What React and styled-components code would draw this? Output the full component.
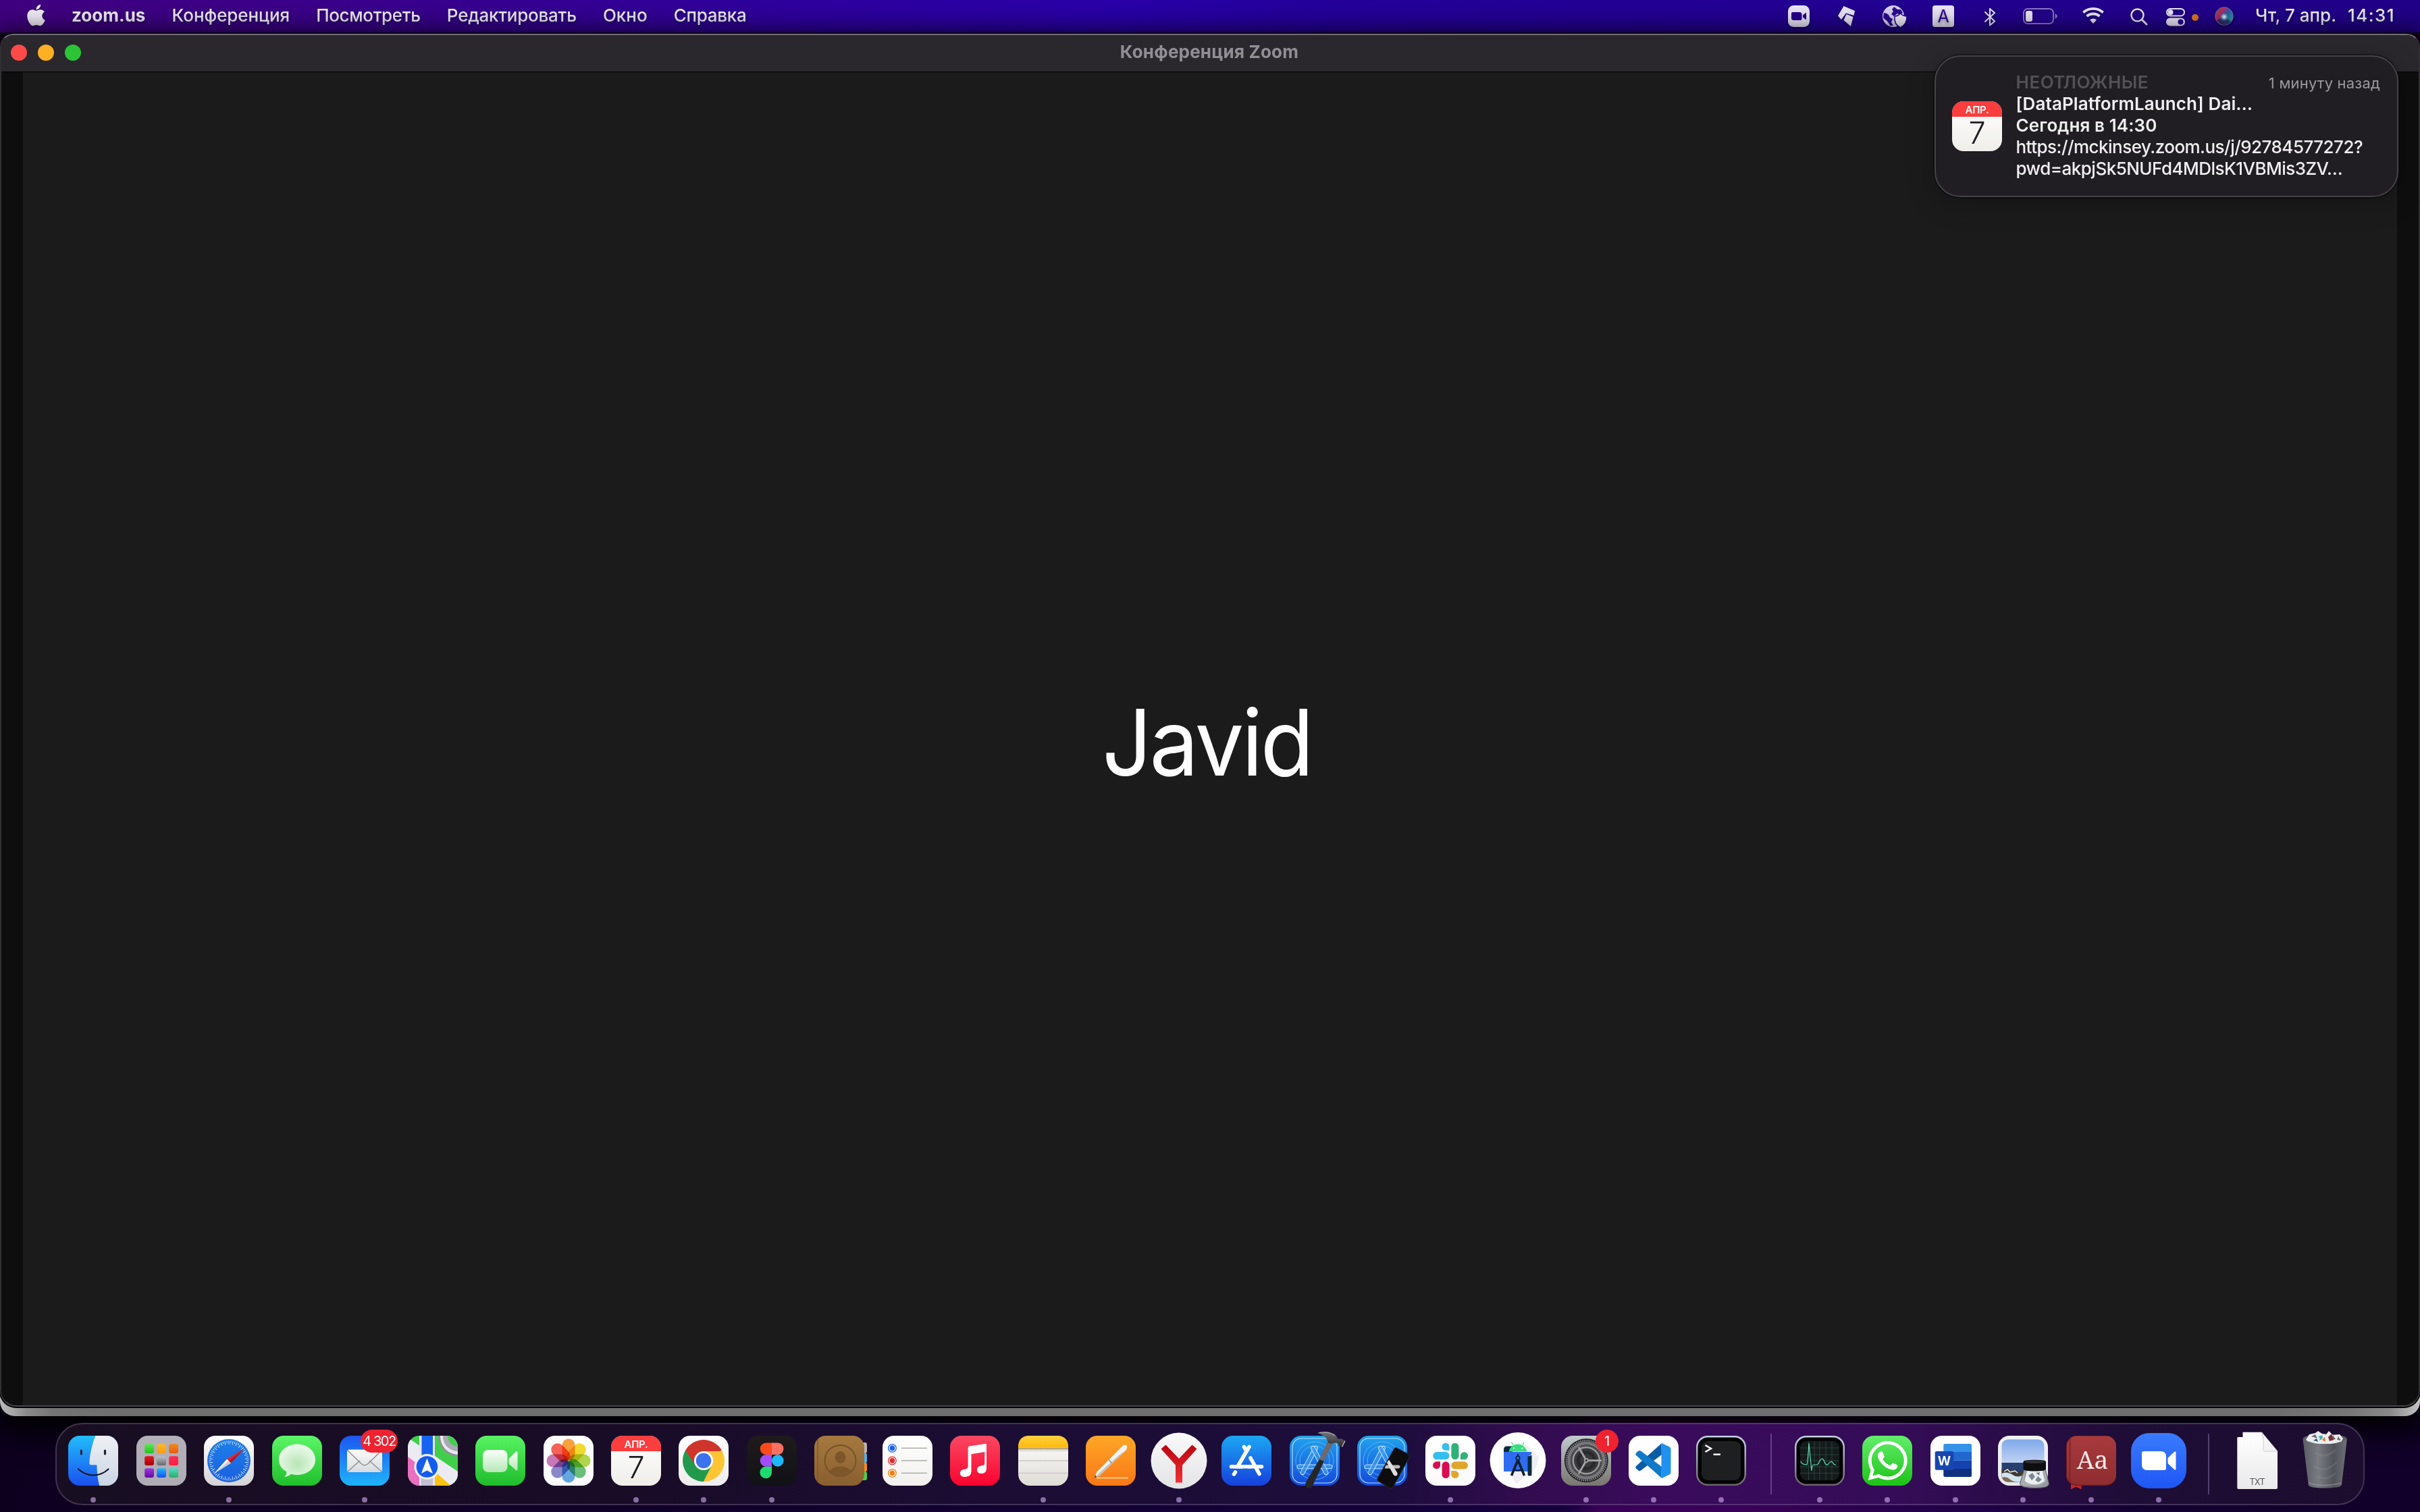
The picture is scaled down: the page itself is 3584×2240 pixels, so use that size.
import React from "react";
import styled, { createGlobalStyle, css } from "styled-components";
import { FaApple, FaWhatsapp } from "react-icons/fa";

const GlobalStyle = createGlobalStyle`
  * { box-sizing: border-box; }
  body { margin: 0; background: #0d0020; font-family: Inter, "Noto Sans", sans-serif; }
`;

/* ---------- Desktop and menu bar ---------- */
const Desktop = styled.div`
  position: relative;
  width: 3584px;
  height: 2240px;
  display: flex;
  flex-direction: column;
  overflow: hidden;
  background: linear-gradient(90deg, #0d001f 0%, #0f0028 25%, #130038 55%, #15003c 64.7%, #380056 66%, #390058 72%, #1d0045 82%, #12002e 90%, #110029 100%);
`;
const MenuBar = styled.header`
  flex: none;
  height: 48px;
  padding: 0 0 3px 40px;
  display: flex;
  align-items: center;
  background: linear-gradient(90deg, #40007f 0%, #38008e 18%, #2e009e 33%, #2900a8 46%, #240099 56%, #230092 76%, #210088 100%);
  color: #f3eefa;
  text-shadow: 0 2px 4px rgba(10, 0, 40, 0.45);
`;
const AppleMark = styled(FaApple)`
  width: 27px;
  height: 37px;
  margin: 0 39px 0 0;
  filter: drop-shadow(0 2px 2px rgba(10, 0, 40, 0.4));
`;
const Menus = styled.nav`
  display: flex;
  gap: 39.2px;
`;
const MenuItem = styled.span`
  font-size: 26px;
  line-height: 32px;
  white-space: nowrap;
  font-weight: ${(p) => (p.$app ? 700 : 500)};
  letter-spacing: ${(p) => p.$track || 0}px;
`;
const StatusArea = styled.div`
  margin-left: auto;
  display: flex;
  align-items: center;
`;
const StatusIcon = styled.svg`
  width: ${(p) => p.$w}px;
  height: 48px;
  margin: 3px 0 0 ${(p) => p.$gap}px;
  overflow: visible;
  filter: drop-shadow(0 2px 2px rgba(10, 0, 40, 0.35));
`;
const DateText = styled(MenuItem)`
  width: 137px;
  margin-left: 32px;
`;
const TimeText = styled(MenuItem)`
  width: 107px;
  letter-spacing: 1.4px;
`;

/* ---------- Window ---------- */
const WindowStack = styled.div`
  flex: none;
  height: 2050px;
  padding: 2px 0 14px;
  border-radius: 0 0 22px 22px;
  background: linear-gradient(90deg, #b8b8b8 0, #a8a8a8 18px, #8a8a8a 40px, #747474 80px, #6f6f6f 180px, #6f6f6f 3380px, #777 3480px, #8a8a8a 3540px, #c4c4c4 100%);
  box-shadow: 0 14px 44px 10px #000;
  position: relative;
`;
const TopEdge = styled.div`
  height: 24px;
  margin: -2px 0 -22px;
  background: #0c0012;
`;
const Window = styled.main`
  position: relative;
  height: 2034px;
  display: flex;
  flex-direction: column;
  border-radius: 20px 20px 24px 24px;
  background: #1b1b1b;
  border: 2px solid #48464a;
  border-top-color: #716d77;
  border-left-color: #323034;
  border-right-color: #323034;
  overflow: hidden;
  box-shadow: 0 1px 0 1px #000;
`;
const TitleBar = styled.div`
  flex: none;
  height: 55px;
  padding: 0 14px 5px;
  display: grid;
  grid-template-columns: 1fr auto 1fr;
  align-items: center;
  background: #2a272d;
  border-bottom: 1px solid #000;
`;
const Lights = styled.div`
  display: flex;
  gap: 16px;
  padding-top: 3px;
`;
const Light = styled.span`
  width: 24px;
  height: 24px;
  border-radius: 50%;
  background: ${(p) => p.$color};
`;
const Title = styled.h1`
  margin: 0 2px 0 0;
  font-size: 26px;
  line-height: 32px;
  font-weight: 700;
  letter-spacing: 0.2px;
  color: #918e96;
`;
const Stage = styled.section`
  flex: 1;
  display: flex;
  align-items: center;
  justify-content: center;
  padding-top: 11px;
  border: solid #0e0e0e;
  border-width: 0 32px;
`;
const Participant = styled.div`
  font-size: 136px;
  line-height: 1;
  font-weight: 430;
  letter-spacing: -3.6px;
  margin-left: -9px;
  transform: scaleX(0.95);
  color: #fff;
`;

/* ---------- Notification ---------- */
const Notification = styled.aside`
  position: absolute;
  top: 82px;
  left: 2865px;
  width: 687px;
  height: 210px;
  padding: 21px 25px 23px 23px;
  display: flex;
  align-items: center;
  gap: 19.5px;
  border: 2px solid #454347;
  border-radius: 38px;
  background: #201e23;
  box-shadow: 0 0 2px 1px #0a0a0a, 0 10px 40px rgba(0, 0, 0, 0.25);
`;
const NoteIcon = styled.svg`
  flex: none;
  width: 76px;
  height: 76px;
  margin-top: 1px;
`;
const NoteBody = styled.div`
  flex: 1;
  min-width: 0;
`;
const NoteHead = styled.div`
  display: flex;
  justify-content: space-between;
`;
const noteText = css`
  font-size: 26px;
  line-height: 32px;
  white-space: nowrap;
`;
const NoteTag = styled.div`
  ${noteText}
  font-weight: 600;
  letter-spacing: 0.5px;
  color: #535156;
`;
const NoteTime = styled.div`
  ${noteText}
  padding-top: 1px;
  font-size: 22px;
  height: 32px;
  letter-spacing: 0.2px;
  color: #9b999d;
`;
const NoteLine = styled.div`
  ${noteText}
  font-weight: ${(p) => (p.$bold ? 600 : 500)};
  letter-spacing: ${(p) => (p.$bold ? 0.1 : -0.53)}px;
  color: #efeef0;
`;

/* ---------- Dock ---------- */
const Dock = styled.footer`
  position: relative;
  flex: none;
  width: 3420px;
  height: 122px;
  margin: 10px 0 0 82px;
  padding: 0 0 0 4px;
  display: flex;
  border: 2px solid rgba(190, 170, 210, 0.24);
  border-radius: 40px;
  background: linear-gradient(90deg, #180e22 0%, #190c27 25%, #1b0d33 40%, #1d0d3c 58%, #330c50 64%, #3a0b5c 70%, #340c57 80%, #1e0d36 90%, #1c0d2e 100%);
`;
const Slot = styled.div`
  position: relative;
  flex: none;
  width: 100.47px;
  padding-top: 4px;
  display: flex;
  flex-direction: column;
  align-items: center;
`;
const Glyph = styled.svg`
  width: 100px;
  height: 100px;
  overflow: visible;
`;
const Running = styled.i`
  width: 8px;
  height: 8px;
  margin-top: 4px;
  border-radius: 50%;
  background: rgba(205, 170, 235, 0.62);
`;
const Divider = styled.div`
  flex: none;
  width: 2px;
  height: 90px;
  margin: 14px 20.5px 0 22.5px;
  background: rgba(190, 160, 220, 0.35);
`;

const Grad = ({ id, a, b, x2 = 0, y2 = 1 }) => (
  <linearGradient id={id} x1="0" y1="0" x2={x2} y2={y2}>
    <stop offset="0" stopColor={a} />
    <stop offset="1" stopColor={b} />
  </linearGradient>
);
const Tile = ({ id, a, b }) => (
  <>
    <defs><Grad id={id} a={a} b={b} /></defs>
    <rect x="13" y="13" width="74" height="74" rx="17" fill={`url(#${id})`} />
  </>
);
const Badge = ({ x, w, children, track = 0, size = 20 }) => (
  <g>
    <rect x={x} y="4" width={w} height="34" rx="17" fill="#ef2230" />
    <text x={x + w / 2} y="28" fontSize={size} fill="#fff" textAnchor="middle" letterSpacing={track} fontFamily="Inter, sans-serif">{children}</text>
  </g>
);

const Finder = () => (
  <>
    <defs>
      <Grad id="fiA" a="#22bdfb" b="#1a50ee" />
      <Grad id="fiB" a="#f0f0f4" b="#c9d5e4" />
      <clipPath id="fiC"><rect x="13" y="13" width="74" height="74" rx="17" /></clipPath>
    </defs>
    <g clipPath="url(#fiC)">
      <rect x="13" y="13" width="74" height="74" fill="url(#fiA)" />
      <path d="M53.3 13C48 27 45 41 44.4 53.500Q44.300 56.300 47 56.300H55.400Q55.500 73 59.200 87H87V13Z" fill="url(#fiB)" />
    </g>
    <path d="M32.400 35V40M67.500 35V40" stroke="#1c2430" strokeWidth="3.200" strokeLinecap="round" />
    <path d="M28 62.500Q38 71.500 50 71.500Q63 71.500 72.500 62.500" fill="none" stroke="#111722" strokeWidth="2.200" strokeLinecap="round" />
  </>
);
const launchCells = [
  ["#5ee84d", "#1fc41f"], ["#fcb926", "#f79b0c"], ["#f18a1b", "#e75c10"],
  ["#e01b23", "#a8000a"], ["#b9c0c8", "#66696e"], ["#fb2d55", "#f9203f"],
  ["#a138dd", "#6309a4"], ["#22b8fa", "#1650ee"], ["#4fdcc0", "#2bab66"],
];
const Launchpad = () => (
  <>
    <Tile id="lp" a="#b4b0ba" b="#aeacb4" />
    {launchCells.map(([a, b], i) => (
      <g key={i}>
        <defs><Grad id={`lp${i}`} a={a} b={b} /></defs>
        <rect x={25.2 + (i % 3) * 18} y={25.2 + Math.floor(i / 3) * 18} width="13.800" height="13.800" rx="3" fill={`url(#lp${i})`} />
      </g>
    ))}
  </>
);
const Safari = () => (
  <>
    <Tile id="saA" a="#ffffff" b="#d4d4d6" />
    <defs><Grad id="saB" a="#1e80e8" b="#1b5fe0" /></defs>
    <circle cx="50" cy="50" r="32" fill="url(#saB)" />
    {Array.from({ length: 60 }, (_, i) => (
      <path key={i} d={i % 2 ? "M50 20.500V23.500" : "M50 20.500V26"} stroke="#cfe3fb" strokeWidth="1" transform={`rotate(${i * 6} 50 50)`} />
    ))}
    <path d="M73 31.500L52.500 53.500L47 47.500Z" fill="#e32b2f" />
    <path d="M47 47.500L53 53.500L28 69Z" fill="#f2f2f4" />
    <path d="M53 53.500L73 31.500L50 50.500Z" fill="#b41820" />
    <path d="M53 53.500L28 69L50 50.500Z" fill="#c9cdd6" />
  </>
);
const Messages = () => (
  <>
    <Tile id="meA" a="#5cf667" b="#1fbf2a" />
    <defs>
      <radialGradient id="meB" cx=".5" cy=".6" r=".65"><stop offset="0" stopColor="#b7e5b5" /><stop offset="1" stopColor="#f3fcf2" /></radialGradient>
    </defs>
    <path d="M50 25.500C65 25.500 77 35.500 77 48.500S65 71 50 71Q45 71 41 69.700Q37 73.500 31 74Q34.500 71 34.500 66.500Q23 60 23 48.500C23 35.500 35 25.500 50 25.500Z" fill="url(#meB)" />
  </>
);
const Mail = () => (
  <>
    <Tile id="maA" a="#1d56f0" b="#1fb4fb" />
    <defs><Grad id="maB" a="#fafafa" b="#d9dadd" /></defs>
    <rect x="24" y="33.500" width="52" height="33.500" rx="3.500" fill="url(#maB)" />
    <path d="M25 66L43 50M75 66L57 50M25 35L45 54.500Q50 59 55 54.500L75 35" fill="none" stroke="#8f9196" strokeWidth="1.500" />
    <Badge x={44} w={55} track={-1.4}>4 302</Badge>
  </>
);
const Maps = () => (
  <>
    <defs><clipPath id="mpC"><rect x="13" y="13" width="74" height="74" rx="17" /></clipPath></defs>
    <g clipPath="url(#mpC)">
      <rect x="13" y="13" width="74" height="74" fill="#41cf4b" />
      <path d="M13 38L87 92H13Z" fill="#ea6fc0" />
      <path d="M13 16L87 66V90H73L13 44Z" fill="#eceaf2" />
      <path d="M53 66L80 90H50Z" fill="#fcc315" />
      <path d="M87 13H58A30 30 0 0 0 87 44Z" fill="#8f8f99" />
      <path d="M87 13H61A27 27 0 0 0 87 41Z" fill="#e8e7ee" />
      <path d="M87 13H65A22 22 0 0 0 87 36Z" fill="#a9a9b3" />
      <path d="M87 13H72A16 16 0 0 0 87 29Z" fill="#41cf4b" />
      <path d="M30 13H53V87H30Z" fill="#e6e5ee" />
      <path d="M33.500 13H50V87H33.500Z" fill="#1763f2" />
      <path d="M33.500 60H50V87H33.500Z" fill="#c4bfd2" />
    </g>
    <circle cx="41.400" cy="59" r="19" fill="#eeeef4" />
    <circle cx="41.400" cy="59" r="15.800" fill="#145cee" />
    <path d="M41.400 46.500L50 69L41.400 64.500L32.800 69Z" fill="#f4f5fa" />
  </>
);
const FaceTime = () => (
  <>
    <Tile id="ftA" a="#58f363" b="#1fbc2b" />
    <defs><Grad id="ftB" a="#fbfffb" b="#b5e8b6" /></defs>
    <rect x="24" y="34" width="36.500" height="33" rx="8" fill="url(#ftB)" />
    <path d="M62.500 47L73 36.500Q75.500 35 75.500 38V62Q75.500 66 73 64L62.500 54.500Z" fill="url(#ftB)" />
  </>
);
const petals = ["#f9911e", "#f0d40c", "#a5d02c", "#54b768", "#4b9be0", "#7b78c4", "#c363ac", "#f4483c"];
const Petal = styled.rect`
  mix-blend-mode: multiply;
`;
const Photos = () => (
  <>
    <Tile id="phA" a="#ffffff" b="#fafafc" />
    {petals.map((c, i) => (
      <Petal key={c} x="40.500" y="17.500" width="19" height="32" rx="9.500" fill={c} fillOpacity=".86" transform={`rotate(${i * 45} 50 50)`} />
    ))}
  </>
);
const CalendarArt = () => (
  <>
    <defs>
      <Grad id="caB" a="#ffffff" b="#efeee9" />
      <clipPath id="caC"><rect x="13" y="13" width="74" height="74" rx="17" /></clipPath>
    </defs>
    <g clipPath="url(#caC)">
      <rect x="13" y="13" width="74" height="74" fill="url(#caB)" />
      <rect x="13" y="13" width="74" height="23" fill="#fb3d3e" />
    </g>
    <text x="50" y="31" fontSize="15" fontWeight="600" letterSpacing="-.3" fill="#fff" textAnchor="middle">АПР.</text>
    <text x="50" y="76" fontSize="45" fontWeight="300" fill="#1d1d1f" textAnchor="middle">7</text>
  </>
);
const Chrome = () => (
  <>
    <Tile id="chA" a="#ffffff" b="#ededee" />
    <path d="M50 50L23.200 34.500A31 31 0 0 1 76.800 34.500Z" fill="#d0352c" />
    <path d="M50 50L76.800 34.500A31 31 0 0 1 50 81Z" fill="#fdc433" />
    <path d="M50 50L50 81A31 31 0 0 1 23.200 34.500Z" fill="#229a4d" />
    <path d="M50 36H76.800L62 57Z" fill="#fdc433" />
    <path d="M62.100 57L50 81L38 57Z" fill="#229a4d" />
    <path d="M37.900 57L23.200 34.500L50 36Z" fill="#d0352c" />
    <path d="M62.100 57L50 81H54L70 62L74 45L62 42Z" fill="#fdc433" />
    <circle cx="50" cy="50" r="14" fill="#fff" />
    <circle cx="50" cy="50" r="11.300" fill="#3d72ee" />
  </>
);
const Figma = () => (
  <>
    <Tile id="fgA" a="#201a1c" b="#101216" />
    <path d="M50 23.500H41.500A8.800 8.800 0 0 0 41.500 41.100H50Z" fill="#fc4a1c" />
    <path d="M50 23.500H58.700A8.800 8.800 0 0 1 58.700 41.100H50Z" fill="#fe7064" />
    <path d="M50 41.100H41.500A8.800 8.800 0 0 0 41.500 58.700H50Z" fill="#a44bfb" />
    <circle cx="58.800" cy="49.900" r="8.800" fill="#1eb9fb" />
    <path d="M50 58.700H41.500A8.800 8.800 0 1 0 50 67.500Z" fill="#1ddb6e" />
  </>
);
const Contacts = () => (
  <>
    <rect x="80" y="23" width="11" height="16" rx="3" fill="#b8b4ae" />
    <rect x="80" y="39" width="11" height="14" rx="2" fill="#58aee6" />
    <rect x="80" y="53" width="11" height="13" rx="2" fill="#f48b1f" />
    <rect x="80" y="66" width="11" height="13" rx="3" fill="#4bcf4d" />
    <Tile id="coA" a="#a5793f" b="#8a5f2f" />
    <path d="M18 18V82" stroke="#7b5428" strokeWidth="1.200" />
    <circle cx="51.500" cy="50" r="23" fill="none" stroke="#74502a" strokeWidth="1.800" />
    <ellipse cx="51.500" cy="45" rx="8" ry="9" fill="#7d5629" />
    <path d="M35 65.500Q42 58.500 51.500 58.500T68 65.500Q61 73 51.500 73T35 65.500Z" fill="#7d5629" />
  </>
);
const Reminders = () => (
  <>
    <Tile id="reA" a="#ffffff" b="#f1f0ed" />
    {["#1760f0", "#e62a30", "#f08016"].map((c, i) => (
      <g key={c}>
        <circle cx="27.400" cy={31.4 + i * 18.5} r="5.800" fill="#fff" stroke={c} strokeWidth="1.300" />
        <circle cx="27.400" cy={31.4 + i * 18.5} r="3.800" fill={c} />
        <path d={`M41 ${31.4 + i * 18.5}H79`} stroke="#9d9d9f" strokeWidth="1.200" />
      </g>
    ))}
  </>
);
const Music = () => (
  <>
    <Tile id="muA" a="#fb4862" b="#f9032e" />
    <path d="M39.600 31Q39.600 29 41.500 28.600L65 24.900Q67 24.500 67 26.500V62Q67 68.500 59.500 69Q53 69 53 63.500Q53 58.500 59 57.500Q64.300 57 64.300 54V37L44.500 40.300V66Q44.500 73.500 35.500 74Q28 74 27.700 68.500Q28 63.500 34 62.700Q39.600 62 39.600 58.500Z" fill="#fff" />
  </>
);
const Notes = () => (
  <>
    <Tile id="noA" a="#ffffff" b="#dfdcd5" />
    <defs><Grad id="noB" a="#fed03c" b="#fcba0c" /></defs>
    <path d="M13 31.500V30Q13 13 30 13H70Q87 13 87 30V31.500Z" fill="url(#noB)" />
    <path d="M13 32.500H87" stroke="#8c8676" strokeWidth="1.400" />
    <path d="M14 35.300H87" stroke="#aaa69d" strokeWidth="1.200" strokeDasharray="1.300 1.300" />
    <path d="M13 50H87M13 68.500H87" stroke="#c9c8c6" strokeWidth="1.300" />
  </>
);
const Pages = () => (
  <>
    <Tile id="paA" a="#ffa726" b="#f87717" />
    <path d="M29 75.600H76" stroke="#ffc98a" strokeWidth="2" />
    <path d="M25.500 75.500L29.500 66.500L67 28.500Q71 25 73.500 27.500Q75.500 30.500 72 35L33.500 72Z" fill="#f6f4f2" />
    <path d="M25.500 75.500L33.500 72L72 35Q65 38 30 71Z" fill="#c7c2bf" />
    <path d="M47 48.500L51.500 53.500" stroke="#8d8a88" strokeWidth="1.500" />
    <path d="M25.500 75.500L27.200 71.500L29.500 74Z" fill="#4a3a30" />
  </>
);
const Yandex = () => (
  <>
    <defs><Grad id="yaA" a="#f9f9fa" b="#e4e4e6" /><Grad id="yaB" a="#bd0410" b="#ef3236" /></defs>
    <circle cx="50" cy="50" r="41.500" fill="url(#yaA)" />
    <path d="M23.500 32.500L30.500 26.500L50 47L69.500 26.500L76.500 32.500L55 56.500V82.500H45V56.500Z" fill="url(#yaB)" />
  </>
);
const AppStore = () => (
  <>
    <Tile id="asA" a="#1ca7f3" b="#1640dc" />
    <g stroke="#fff" strokeWidth="5.600" strokeLinecap="round">
      <path d="M54 29.500L38.500 56M46.500 29.500L50 35.500M56 46L69 69.500M27.500 58.700H43M54 58.700H72.500M33.500 67L31.500 70" />
      <path d="M38.500 56L37 58.700H56" />
    </g>
  </>
);
const Blueprint = ({ id }) => (
  <>
    <Tile id={id} a="#21a4ee" b="#1348dc" />
    <rect x="17" y="17" width="66" height="66" rx="13" fill="none" stroke="#bfe2fb" strokeWidth="1.100" />
    <g fill="none" stroke="#6dbaf4" strokeWidth=".8"><circle cx="50" cy="50" r="28" /><circle cx="50" cy="50" r="22" /></g>
    <g fill="#3c97ee" fillOpacity=".75" stroke="#c6e6fc" strokeWidth="1">
      <rect x="24" y="56" width="52" height="5.800" rx="2.900" />
      <rect x="-3" y="-23" width="6" height="47" rx="3" transform="translate(42 49) rotate(28)" />
      <rect x="-3" y="-23" width="6" height="47" rx="3" transform="translate(57 49) rotate(-28)" />
    </g>
  </>
);
const Xcode = () => (
  <>
    <Blueprint id="xcA" />
    <defs><Grad id="xcB" a="#77777c" b="#2b2b30" /></defs>
    <path d="M71 18L79 21L63 52L56 49Z" fill="#6a6a70" />
    <path d="M57 48L64 51L47 87Q44 93 38.500 90Q34.500 87.500 37 82Z" fill="#26262a" />
    <path d="M54 9Q69 4 81 12L85 18L90 17.500L95 20.500L90.500 29.500L86 28.500L84.500 24L78 23.500Q74 26 69.500 23Q68.500 13 54 9Z" fill="url(#xcB)" />
    <path d="M56 8.800Q69 5.500 80 12.500" fill="none" stroke="#b6b6bb" strokeWidth="1" />
    <path d="M95 20.500L90.500 29.500" stroke="#c9c9cd" strokeWidth="1.200" />
  </>
);
const Simulator = () => (
  <>
    <Blueprint id="siA" />
    <path d="M68 31.500Q69.500 30.300 71.500 31L88.500 40Q91.500 42 90.500 44.500L66 89.500Q64 92 61 90.500L44 80.500Q41.500 78.500 43 76Z" fill="#0d0d0f" stroke="#303036" strokeWidth=".8" />
    <path d="M55.500 56.500H74Q77 57 76.500 59Q76 61.500 74 61.500H53.500Z" fill="#bdbdc0" />
    <path d="M60 48.500L72.500 68Q73 72 70.500 72.500Q67.500 72.800 66.500 70.500L57 53Z" fill="#dedee0" />
  </>
);
const Slack = () => (
  <>
    <Tile id="slA" a="#ffffff" b="#fafafa" />
    <g fill="#36bdf0"><rect x="24.200" y="37" width="24.300" height="11.300" rx="5.600" /><path d="M48.500 34.800H43.500A5.500 5.500 0 1 1 48.500 29.300Z" /></g>
    <g fill="#2fb077"><rect x="51.400" y="23.700" width="11" height="24.600" rx="5.500" /><path d="M65 48.300V43A5.500 5.500 0 1 1 70.500 48.300Z" /></g>
    <g fill="#e0a62c"><rect x="51.400" y="51.300" width="24.600" height="11.300" rx="5.600" /><path d="M51.400 65H57A5.500 5.500 0 1 1 51.400 70.500Z" /></g>
    <g fill="#da0b52"><rect x="37.600" y="51.300" width="11" height="24.700" rx="5.500" /><path d="M35 51.300V57A5.500 5.500 0 1 1 29.500 51.300Z" /></g>
  </>
);
const AndroidStudio = () => (
  <>
    <circle cx="50" cy="49.500" r="41.500" fill="#fff" />
    <path d="M60 24L81 45Q78 62 70 68L58 60ZM39 72L48 84L62 72L50 60Z" fill="#efeff1" />
    <path d="M29 34Q29 28.600 34 28.600H42V40H29Z" fill="#0b2a3e" />
    <path d="M29 37H70Q71.500 42 65 43V66H29Z" fill="#2f6cf0" />
    <path d="M64.500 43.500Q67 42.500 70.500 42V70.500Q70.500 72.500 67.500 72.500T64.500 70.500Z" fill="#0b2a3e" />
    <path d="M36.600 36.500A13.400 12.500 0 0 1 63.200 36.500Z" fill="#3ddb83" />
    <path d="M43 27L40.500 22.500M57 27L59 22.500" stroke="#3ddb83" strokeWidth="1.200" />
    <circle cx="44" cy="31.500" r="1" fill="#fff" /><circle cx="56" cy="31.500" r="1" fill="#fff" />
    <g fill="none" stroke="#0b2030" strokeWidth="3"><circle cx="50" cy="46" r="2.800" strokeWidth="1.600" /><path d="M50 49L40.500 72M50 49L59.500 72" strokeWidth="3.600" /><path d="M43 62Q50 67 57 62" strokeWidth="2" /><path d="M50 40V43" strokeWidth="2" /></g>
  </>
);
const Settings = () => (
  <>
    <Tile id="seA" a="#c2cace" b="#77756f" />
    <circle cx="50.300" cy="49.700" r="32.500" fill="#26262a" />
    <circle cx="50.300" cy="49.700" r="29.500" fill="none" stroke="#8a8a8e" strokeWidth="2.600" strokeDasharray="1.600 1.490" />
    <circle cx="50.300" cy="49.700" r="25.800" fill="none" stroke="#77777b" strokeWidth="4.500" />
    <circle cx="50.300" cy="49.700" r="23.500" fill="#4c4c4e" />
    <circle cx="50.300" cy="49.700" r="19.500" fill="#3a3a3c" stroke="#9b9b9e" strokeWidth="2.400" />
    <circle cx="50.300" cy="49.700" r="12" fill="none" stroke="#2a2a2c" strokeWidth="5" />
    <g stroke="#a5a5a8" strokeWidth="2.800"><path d="M50.300 49.700H73" /><path d="M50.300 49.700H73" transform="rotate(120 50.300 49.700)" /><path d="M50.300 49.700H73" transform="rotate(240 50.300 49.700)" /></g>
    <circle cx="50.300" cy="49.700" r="3.600" fill="#98989b" /><circle cx="50.300" cy="49.700" r="1.400" fill="#2a2a2c" />
    <Badge x={64} w={34}>1</Badge>
  </>
);
const VSCode = () => (
  <>
    <Tile id="vsA" a="#ffffff" b="#fdfdfd" />
    <path d="M61.500 24.500L24 58Q22.500 59.800 24 61.500L27.500 64.500Q29 65.500 31 64.500L62 41Z" fill="#0a5da5" />
    <path d="M61.500 75.500L24 42Q22.500 40.200 24 38.500L27.500 35.500Q29 34.500 31 35.500L62 59Z" fill="#1079c8" />
    <path d="M62 24L73.500 29.500Q75.500 30.500 75.500 33V67Q75.500 69.500 73.500 70.500L62 76Q60.500 75.500 61.500 73V27Q60.500 24.500 62 24Z" fill="#2290ee" />
  </>
);
const Screen = ({ id, fill }) => (
  <>
    <Tile id={id} a="#c3d6e6" b="#6a6468" />
    <rect x="15.500" y="15.500" width="69" height="69" rx="14.500" fill="#030304" />
    <rect x="21" y="21" width="58" height="58" rx="9.500" fill={fill} />
  </>
);
const Terminal = () => (
  <>
    <Screen id="teA" fill="#1e1f21" />
    <path d="M26.500 27L35 32L26.500 37M38.500 40.700H49" fill="none" stroke="#fff" strokeWidth="2.500" />
  </>
);
const Activity = () => (
  <>
    <Screen id="acA" fill="#141b1b" />
    <path d="M33.500 21V79M42 21V79M50 21V79M59 21V79M68 21V79M21 31H79M21 41H79M21 50H79M21 59H79M21 68.500H79" stroke="#34504a" strokeWidth=".7" />
    <path d="M21.600 51Q24 56 31 56Q32.500 50 34 24Q35.500 40 38 65Q38.500 56 41 56H46Q48 55 50 50Q53 45 56 49Q58 57 62 56Q67 48 70 54Q71 56.500 74 56" fill="none" stroke="#5fdcb4" strokeWidth="1.200" />
  </>
);
const WhatsApp = () => (
  <>
    <Tile id="waA" a="#62ee6b" b="#1cc316" />
    <FaWhatsapp x="17.500" y="16.800" size={66.3} color="#fff" />
  </>
);
const Word = () => (
  <>
    <Tile id="woA" a="#ffffff" b="#ffffff" />
    <path d="M32.300 37V27Q32.300 25 34.500 25H72Q74 25 74 27V37Z" fill="#3593e8" />
    <path d="M32.300 37H74V49.700H32.300Z" fill="#2267cf" />
    <path d="M32.300 49.700H74V62H32.300Z" fill="#1642b0" />
    <path d="M32.300 62H74V72Q74 74 72 74H34.500Q32.300 74 32.300 72Z" fill="#0f2f80" />
    <rect x="19.700" y="36" width="27.600" height="27.700" rx="2.500" fill="#1746ae" />
    <text x="33.500" y="57" fontSize="19" fontWeight="700" fill="#fff" textAnchor="middle" fontFamily="'Open Sans', sans-serif">W</text>
  </>
);
const Preview = () => (
  <>
    <Tile id="prA" a="#f4f4f6" b="#e8e8ea" />
    <defs>
      <clipPath id="prC"><rect x="18.500" y="18.500" width="63" height="63" rx="9" /></clipPath>
      <Grad id="prB" a="#7fa8ea" b="#c2d3f4" />
    </defs>
    <g clipPath="url(#prC)">
      <rect x="18" y="18" width="64" height="36" fill="url(#prB)" />
      <rect x="18" y="53" width="64" height="29" fill="#26406f" />
      <path d="M18 63Q26 60 32 63T48 65L60 70V76H18Z" fill="#3f3a38" />
      <path d="M18 69Q26 65 35 71T52 69V82H18Z" fill="#cfe4ec" />
      <path d="M18 75Q26 73 30 77T44 82H18Z" fill="#7d6a50" />
      <path d="M22 66L27 63L31 67L38 65L42 68" fill="none" stroke="#e9f0f4" strokeWidth="1.400" />
    </g>
    <path d="M52 62H83L88.500 84Q89 90.500 67.500 90.500T45.500 84Z" fill="#a4a8ac" fillOpacity=".9" stroke="#55575a" strokeWidth="1" />
    <path d="M56 65H79L82 80Q76 85 67 85T52.500 80Z" fill="#eceff1" />
    <path d="M58 72L64 68L68 74L63 79ZM68 79L72 73L78 78L73 82ZM69 68L75 67L74 72Z" fill="#7c8894" />
    <path d="M50.500 51.500Q50.500 48.700 67.300 48.700T84 51.500V62Q84 65.500 67.300 65.500T50.500 62Z" fill="#0e0e10" />
    <ellipse cx="67.300" cy="51.700" rx="15" ry="2.200" fill="#303135" />
  </>
);
const Dictionary = () => (
  <>
    <path d="M20 82H35.500V92.500L27.700 88.500L20 92.500Z" fill="#c62525" />
    <rect x="13" y="13" width="74" height="74" rx="15" fill="#6f1f22" />
    <defs><Grad id="diA" a="#a83a3d" b="#8f2d30" /></defs>
    <rect x="14" y="13.500" width="73" height="72" rx="15" fill="url(#diA)" />
    <path d="M18.500 18V82" stroke="#752226" strokeWidth="1.500" />
    <text x="52" y="61.500" fontSize="37" fill="#f5e9e8" textAnchor="middle" fontFamily="'Noto Serif', 'DejaVu Serif', serif">Aa</text>
  </>
);
const ZoomApp = () => (
  <>
    <defs><Grad id="zoA" a="#3a7bfd" b="#1f56f5" /></defs>
    <rect x="9" y="9" width="82" height="82" rx="27" fill="url(#zoA)" />
    <path d="M25 39Q25 36 28 36H53Q61 36 61 44V61Q61 64 58 64H33Q25 64 25 56Z" fill="#fff" />
    <path d="M63.500 46L73 37Q75.500 35 75.500 38V62Q75.500 65 73 63L63.500 54Z" fill="#fff" />
  </>
);
const TextFile = () => (
  <>
    <defs><Grad id="txA" a="#ffffff" b="#e9e9eb" /></defs>
    <path d="M21.500 15H28.500V7.700H56.500L80 36V90Q80 92 78 92H22Q20.300 92 20.300 90V16Z" fill="url(#txA)" />
    <path d="M56.500 7.700L80 36H61Q59 36 59 34Q60 18 56.500 7.700Z" fill="#f4f4f6" stroke="#c4c4c8" strokeWidth=".8" />
    <text x="49.700" y="86" fontSize="12.500" letterSpacing="-.6" fill="#55565a" textAnchor="middle">TXT</text>
  </>
);
const Trash = () => (
  <>
    <defs>
      <linearGradient id="trA" x1="0" x2="1"><stop offset="0" stopColor="#5f6468" /><stop offset=".35" stopColor="#7f8487" /><stop offset=".7" stopColor="#54595d" /><stop offset="1" stopColor="#75797d" /></linearGradient>
    </defs>
    <ellipse cx="50.200" cy="17.500" rx="32.500" ry="7" fill="#5a5e63" />
    <path d="M22 19L27 11L36 9L40 6L46 10L52 11L56 6L62 12L72 11L77 17L74 23Q50 28 26 23Z" fill="#eceded" />
    <path d="M30 14L36 11L39 17ZM44 12L47 16L42 20ZM62 12L66 18L60 20ZM70 14L74 20L68 19Z" fill="#6c6f74" />
    <path d="M40 14L47 13L45 19Z" fill="#35b9b0" /><path d="M46 19L50 15L51 22Z" fill="#e07a2c" /><path d="M55 15L60 10L63 19L57 21Z" fill="#7a2f34" /><path d="M33 20L38 17L40 22Z" fill="#2f5a86" />
    <path d="M17.500 18Q33 25.500 50.200 25.500T82.900 18L75 86Q73 90.500 50 90.500T25.800 86Z" fill="url(#trA)" fillOpacity=".93" />
    <path d="M26 83Q50 90 74.500 83" fill="none" stroke="#9ea3a6" strokeWidth="1.500" strokeOpacity=".6" />
    <path d="M36 38Q50 48 66 34M34 58Q50 70 68 52M40 74Q55 80 66 68" fill="none" stroke="#b3b8ba" strokeWidth="3" strokeOpacity=".14" />
  </>
);

const dockItems = [
  [Finder, 1], [Launchpad], [Safari, 1], [Messages], [Mail, 1], [Maps], [FaceTime], [Photos],
  [CalendarArt, 1], [Chrome, 1], [Figma, 1], [Contacts], [Reminders], [Music], [Notes, 1], [Pages],
  [Yandex, 1], [AppStore], [Xcode], [Simulator], [Slack, 1], [AndroidStudio], [Settings, 1], [VSCode, 1], [Terminal, 1],
  null,
  [Activity, 1], [WhatsApp, 1], [Word, 1], [Preview, 1], [Dictionary, 1], [ZoomApp, 1],
  null,
  [TextFile], [Trash],
];

const ink = "#ece6f8";
const StatusIcons = () => (
  <>
    <StatusIcon $w={32} $gap={0} viewBox="0 0 32 48">
      <rect y="8" width="32" height="32" rx="8.500" fill={ink} />
      <path d="M5 20Q5 18 7 18H17Q20.500 18 20.500 21.500V28Q20.500 30 18.500 30H8.500Q5 30 5 26.500ZM22 22.500L27 18.500V29.500L22 25.500Z" fill="#25018f" />
    </StatusIcon>
    <StatusIcon $w={25} $gap={42} viewBox="0 0 25 48">
      <path d="M8.500 9L25 16L23.500 23L12 19.500L5 29L0 23.500Z" fill={ink} />
      <path d="M12.500 21L22.500 25L19 39L8.500 30Z" fill={ink} />
    </StatusIcon>
    <StatusIcon $w={35} $gap={41} viewBox="0 0 35 48">
      <circle cx="16" cy="24" r="16" fill="#d9cff0" />
      <path d="M2 19Q6 19 9 22L11 26L15 28L13 33L16 38L11 38Q8 31 4 29L1 26ZM17 10L14 14L16 17L13 21L17 24L22 20L26 22L30 19L27 14L22 14Z" fill="#2c0a92" />
      <path d="M26.500 20Q30.500 24 36 24Q36.500 36 26.500 41Q16.500 36 18 24Q23 24 26.500 20Z" fill="#f1ecfa" stroke="#25018f" strokeWidth="1.500" />
    </StatusIcon>
    <StatusIcon $w={32} $gap={39} viewBox="0 0 32 48">
      <rect y="8" width="32" height="32" rx="4" fill={ink} />
      <text x="16" y="33" fontSize="25" textAnchor="middle" fill="#25018f">A</text>
    </StatusIcon>
    <StatusIcon $w={16} $gap={45} viewBox="0 0 16 48">
      <path d="M1 18L15 31.500L8 37.500V13L15 19L1 32" fill="none" stroke={ink} strokeWidth="2.100" strokeLinejoin="round" strokeLinecap="round" />
    </StatusIcon>
    <StatusIcon $w={51} $gap={41} viewBox="0 0 51 48">
      <rect x="1" y="13" width="44" height="22" rx="6" fill="none" stroke="#8f74cb" strokeWidth="2" />
      <rect x="4" y="16" width="10" height="16" rx="3" fill={ink} />
      <path d="M47.500 20Q51 22 51 24T47.500 28Z" fill="#8f74cb" />
    </StatusIcon>
    <StatusIcon $w={32} $gap={37} viewBox="0 0 32 48">
      <g fill="none" stroke={ink} strokeWidth="3.800"><path d="M1.300 18.500Q7.500 12.800 16 12.800T30.700 18.500" /><path d="M6.500 24Q10.500 20.500 16 20.500T25.500 24" /></g>
      <path d="M11 29.500Q16 25.500 21 29.500L16 35Z" fill={ink} />
    </StatusIcon>
    <StatusIcon $w={25} $gap={39} viewBox="0 0 25 48">
      <circle cx="10.500" cy="22.500" r="9" fill="none" stroke={ink} strokeWidth="2.500" />
      <path d="M17 29L24 36" stroke={ink} strokeWidth="3" strokeLinecap="round" />
    </StatusIcon>
    <StatusIcon $w={28} $gap={28} viewBox="0 0 28 48">
      <rect x="1" y="13" width="26" height="10.500" rx="5.200" fill="none" stroke={ink} strokeWidth="2" />
      <circle cx="6.500" cy="18.200" r="4" fill={ink} />
      <rect x="0" y="26.500" width="28" height="12" rx="6" fill={ink} />
      <circle cx="21.500" cy="32.500" r="4" fill="#25018f" />
    </StatusIcon>
    <StatusIcon $w={10} $gap={10} viewBox="0 0 10 48"><circle cx="5" cy="26" r="5" fill="#e2761f" /></StatusIcon>
    <StatusIcon $w={28} $gap={24} viewBox="0 0 28 48">
      <defs>
        <radialGradient id="sr"><stop offset="0" stopColor="#fff" /><stop offset=".35" stopColor="#9bd4e6" stopOpacity=".8" /><stop offset="1" stopColor="#123" stopOpacity="0" /></radialGradient>
        <linearGradient id="sr2" x1="0" y1="0" x2="1" y2=".6"><stop offset="0" stopColor="#2b7a5c" /><stop offset=".35" stopColor="#c32463" /><stop offset=".65" stopColor="#2a5cae" /><stop offset="1" stopColor="#1fa0a8" /></linearGradient>
      </defs>
      <circle cx="14" cy="24" r="13.300" fill="url(#sr2)" stroke="#7d6a8c" strokeWidth="1" />
      <path d="M3 30Q14 22 24 32Q20 37 14 37T3 30Z" fill="#2a1a5c" fillOpacity=".7" />
      <circle cx="14" cy="25" r="8" fill="url(#sr)" />
    </StatusIcon>
  </>
);

export default function App() {
  return (
    <>
      <GlobalStyle />
      <Desktop>
        <MenuBar>
          <AppleMark />
          <Menus>
            <MenuItem $app>zoom.us</MenuItem>
            <MenuItem $track={-0.1}>Конференция</MenuItem>
            <MenuItem $track={-0.35}>Посмотреть</MenuItem>
            <MenuItem $track={-0.25}>Редактировать</MenuItem>
            <MenuItem>Окно</MenuItem>
            <MenuItem $track={-0.3}>Справка</MenuItem>
          </Menus>
          <StatusArea>
            <StatusIcons />
            <DateText>Чт, 7 апр.</DateText>
            <TimeText>14:31</TimeText>
          </StatusArea>
        </MenuBar>
        <WindowStack>
          <TopEdge />
          <Window>
            <TitleBar>
              <Lights>
                <Light $color="#ff4a48" />
                <Light $color="#fdb024" />
                <Light $color="#2bc437" />
              </Lights>
              <Title>Конференция Zoom</Title>
            </TitleBar>
            <Stage>
              <Participant>Javid</Participant>
            </Stage>
          </Window>
        </WindowStack>
        <Dock>
          {dockItems.map((item, i) => {
            if (!item) return <Divider key={i} />;
            const [Art, running] = item;
            return (
              <Slot key={i}>
                <Glyph viewBox="0 0 100 100"><Art /></Glyph>
                {running && <Running />}
              </Slot>
            );
          })}
        </Dock>
        <Notification>
          <NoteIcon viewBox="12 12 76 76"><CalendarArt /></NoteIcon>
          <NoteBody>
            <NoteHead>
              <NoteTag>НЕОТЛОЖНЫЕ</NoteTag>
              <NoteTime>1 минуту назад</NoteTime>
            </NoteHead>
            <NoteLine $bold>[DataPlatformLaunch] Dai…</NoteLine>
            <NoteLine $bold>Сегодня в 14:30</NoteLine>
            <NoteLine>https://mckinsey.zoom.us/j/92784577272?</NoteLine>
            <NoteLine>pwd=akpjSk5NUFd4MDlsK1VBMis3ZV…</NoteLine>
          </NoteBody>
        </Notification>
      </Desktop>
    </>
  );
}
